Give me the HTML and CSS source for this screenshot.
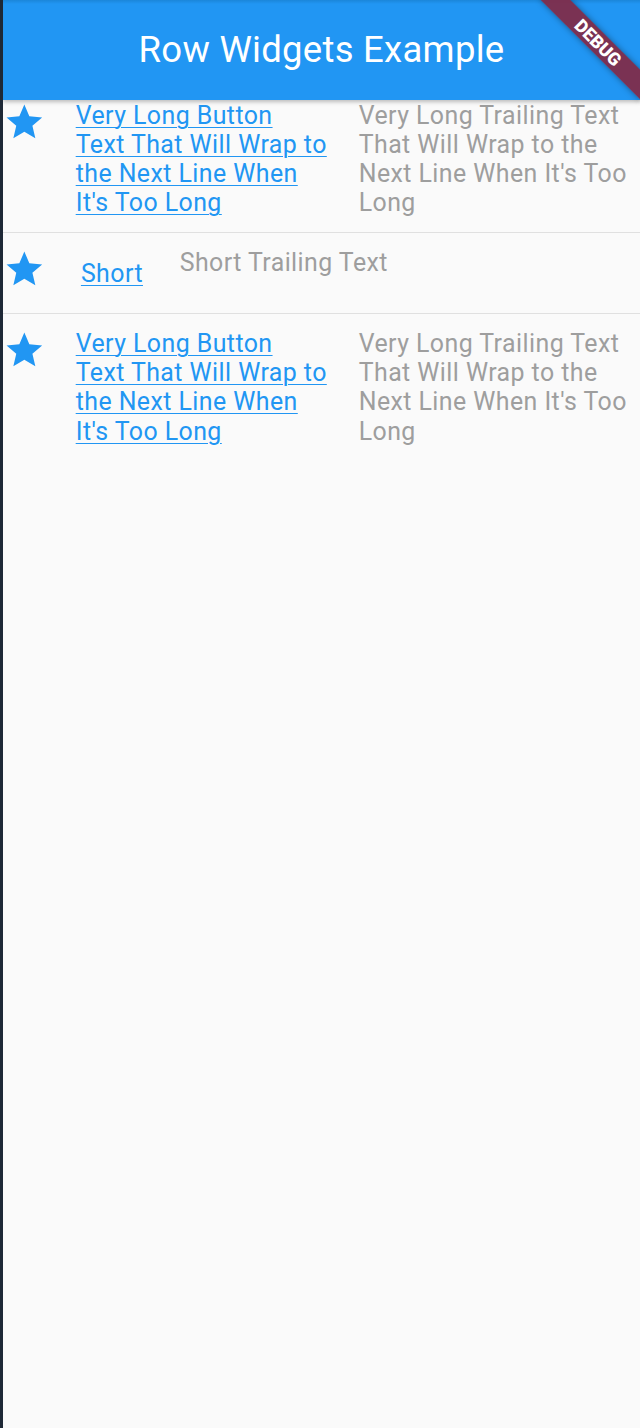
FILE: index.html
```html
<!DOCTYPE html>
<html lang="en">
<head>
    <meta charset="UTF-8">
    <meta name="viewport" content="width=device-width, initial-scale=1.0">
    <title>Row Widgets Example</title>
    <link rel="stylesheet" href="styles.css">
</head>
<body>
    <div class="app">
        <header class="app-bar">
            <h1>Row Widgets Example</h1>
        </header>

        <div class="debug-banner">DEBUG</div>

        <main class="list">
            <div class="row">
                <svg class="star" viewBox="0 0 24 24"><path d="M12 17.27L18.18 21l-1.64-7.03L22 9.24l-7.19-.61L12 2 9.19 8.63 2 9.24l5.46 4.73L5.82 21z"/></svg>
                <a class="text-button" href="#"><span>Very Long Button Text That Will Wrap to the Next Line When It's Too Long</span></a>
                <p class="trailing">Very Long Trailing Text That Will Wrap to the Next Line When It's Too Long</p>
            </div>

            <hr class="divider">

            <div class="row">
                <svg class="star" viewBox="0 0 24 24"><path d="M12 17.27L18.18 21l-1.64-7.03L22 9.24l-7.19-.61L12 2 9.19 8.63 2 9.24l5.46 4.73L5.82 21z"/></svg>
                <a class="text-button" href="#"><span>Short</span></a>
                <p class="trailing">Short Trailing Text</p>
            </div>

            <hr class="divider">

            <div class="row">
                <svg class="star" viewBox="0 0 24 24"><path d="M12 17.27L18.18 21l-1.64-7.03L22 9.24l-7.19-.61L12 2 9.19 8.63 2 9.24l5.46 4.73L5.82 21z"/></svg>
                <a class="text-button" href="#"><span>Very Long Button Text That Will Wrap to the Next Line When It's Too Long</span></a>
                <p class="trailing">Very Long Trailing Text That Will Wrap to the Next Line When It's Too Long</p>
            </div>
        </main>
    </div>
</body>
</html>
```

FILE: styles.css
```css
body {
    margin: 0;
    background-color: #1e2836;
    font-family: Roboto, "Liberation Sans", sans-serif;
}

.app {
    position: relative;
    margin-left: 3px;
    min-height: 1428px;
    background-color: #fafafa;
    overflow: hidden;
}

.app-bar {
    height: 99.5px;
    display: flex;
    align-items: center;
    justify-content: center;
    background: linear-gradient(#1b86d9, #2196f3 4px);
    box-shadow: 0 2px 4px rgba(0, 0, 0, 0.25);
    position: relative;
    z-index: 1;
}

.app-bar h1 {
    margin: 0;
    font-size: 36.5px;
    font-weight: 400;
    letter-spacing: 0.27px;
    color: #ffffff;
}

.debug-banner {
    position: absolute;
    top: 42.4px;
    left: calc(100% - 42.4px);
    width: 142px;
    height: 21.3px;
    margin: -10.65px 0 0 -71px;
    transform: rotate(45deg);
    background: rgba(128, 44, 74, 0.95);
    box-shadow: 0 0 6px rgba(0, 0, 0, 0.4);
    color: #ffffff;
    font-size: 18px;
    font-weight: 900;
    line-height: 21.3px;
    text-align: center;
    z-index: 2;
}

.list {
    padding-top: 1px;
}

.row {
    display: flex;
    align-items: flex-start;
    gap: 16px;
}

.star {
    flex: none;
    width: 42.7px;
    height: 42.7px;
    fill: #2196f3;
}

.text-button {
    flex: 0 1 auto;
    max-width: 281px;
    min-width: 102px;
    min-height: 51px;
    padding: 0 15.5px 0 14px;
    box-sizing: border-box;
    display: flex;
    align-items: center;
    justify-content: center;
    font-size: 24.9px;
    line-height: 29.3px;
    letter-spacing: 0.44px;
    color: #2196f3;
    text-decoration: underline;
    text-decoration-thickness: 1px;
    text-underline-offset: 3px;
}

.trailing {
    flex: 0 1 auto;
    max-width: 281px;
    margin: 0;
    font-size: 24.9px;
    line-height: 29.3px;
    letter-spacing: 0.44px;
    color: #9e9e9e;
}

.divider {
    margin: 14.5px 0;
    border: none;
    height: 1px;
    background-color: #e0e0e0;
}
```
